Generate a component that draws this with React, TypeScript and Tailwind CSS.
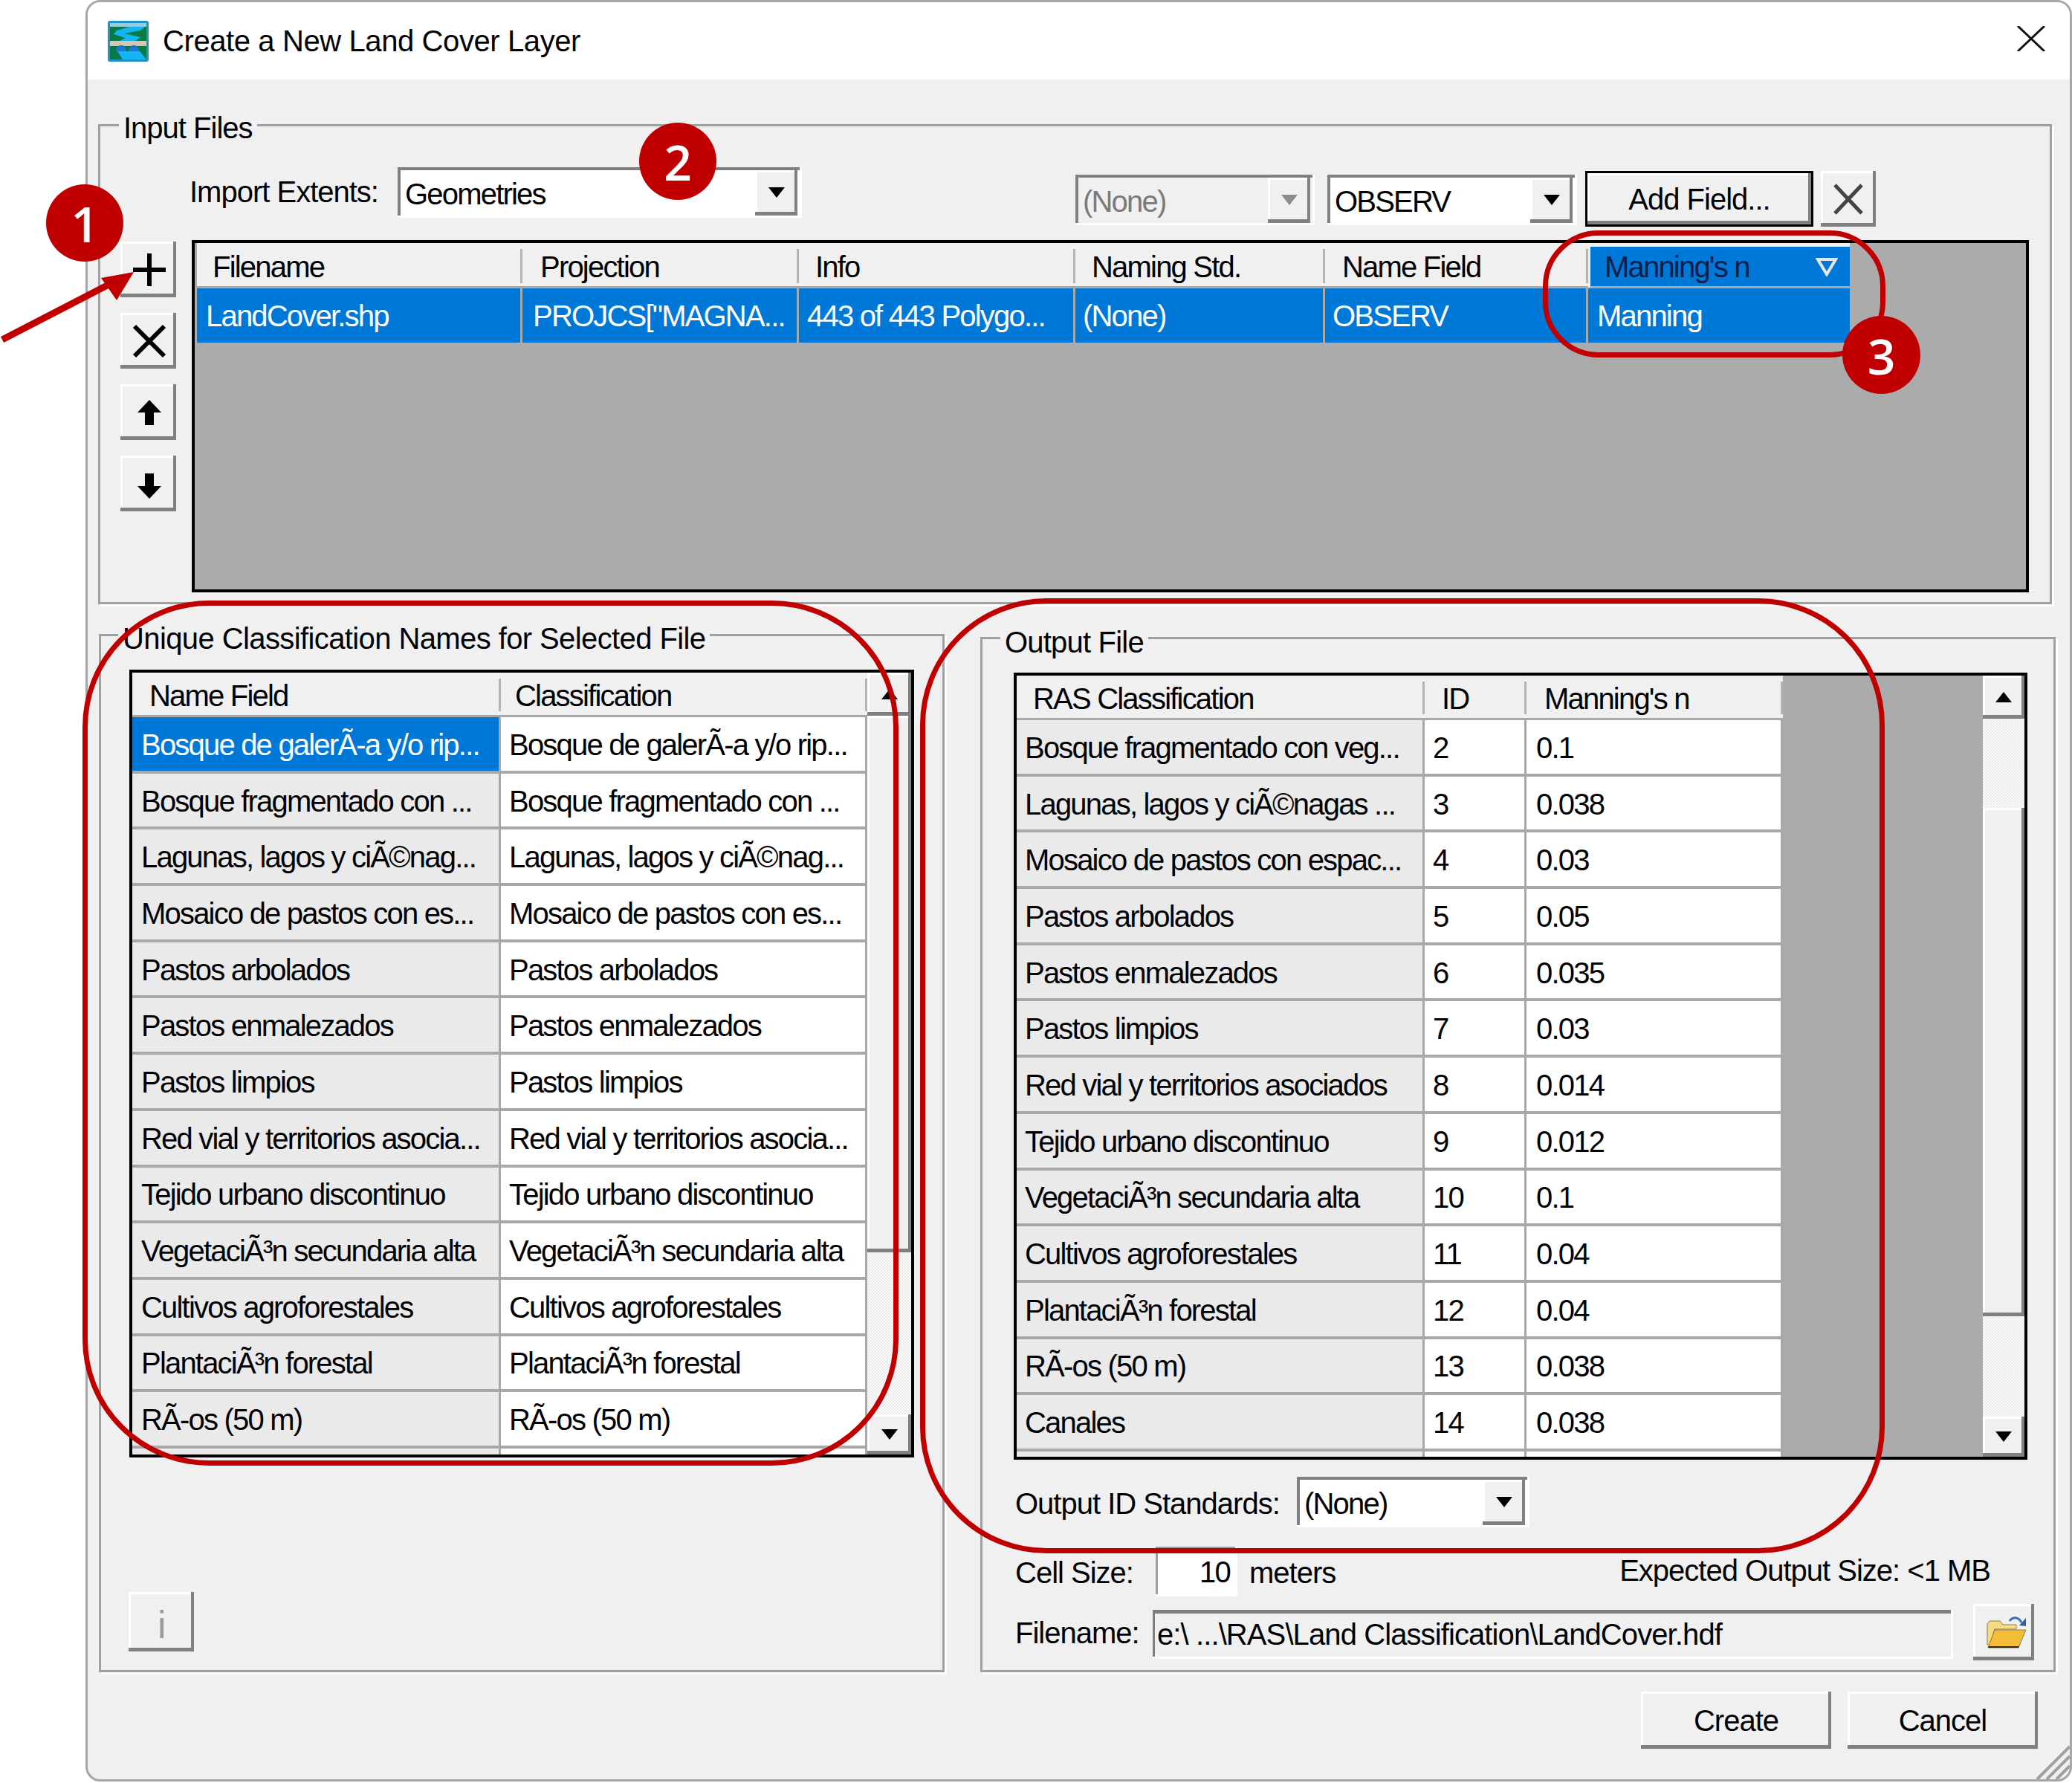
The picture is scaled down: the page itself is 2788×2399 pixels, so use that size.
import type { ReactNode } from 'react';

const raised = 'bg-[#f0f0f0] shadow-[inset_-4px_-5px_0_#808080,inset_3px_3px_0_#ffffff]';
const sunken = 'border-r-[3px] border-b-[3px] border-white shadow-[inset_4px_4px_0_#808080]';
const label = 'tracking-[-1px] pt-[3px]';
const buttonText = 'tracking-[-1px]';
const hatch = 'bg-[repeating-conic-gradient(#ececec_0_25%,#fbfbfb_0_50%)] bg-[length:4px_4px]';

type Col = { width: string; head: string; cell: string; bg: string; label: string };

const fileCols: Col[] = [
  { width: 'w-[438px]', head: 'pl-[21px]', cell: 'pl-[12px]', bg: 'bg-[#0078d7]', label: 'Filename' },
  { width: 'w-[372px]', head: 'pl-[24px]', cell: 'pl-[14px]', bg: 'bg-[#0078d7]', label: 'Projection' },
  { width: 'w-[372px]', head: 'pl-[22px]', cell: 'pl-[11px]', bg: 'bg-[#0078d7]', label: 'Info' },
  { width: 'w-[336px]', head: 'pl-[22px]', cell: 'pl-[10px]', bg: 'bg-[#0078d7]', label: 'Naming Std.' },
  { width: 'w-[354px]', head: 'pl-[23px]', cell: 'pl-[10px]', bg: 'bg-[#0078d7]', label: 'Name Field' },
];

const fileRow = ['LandCover.shp', 'PROJCS["MAGNA...', '443 of 443 Polygo...', '(None)', 'OBSERV'];

const uniqueRows = [
  ['Bosque de galerÃ-a y/o rip...', 'Bosque de galerÃ-a y/o rip...'],
  ['Bosque fragmentado con ...', 'Bosque fragmentado con ...'],
  ['Lagunas, lagos y ciÃ©nag...', 'Lagunas, lagos y ciÃ©nag...'],
  ['Mosaico de pastos con es...', 'Mosaico de pastos con es...'],
  ['Pastos arbolados', 'Pastos arbolados'],
  ['Pastos enmalezados', 'Pastos enmalezados'],
  ['Pastos limpios', 'Pastos limpios'],
  ['Red vial y territorios asocia...', 'Red vial y territorios asocia...'],
  ['Tejido urbano discontinuo', 'Tejido urbano discontinuo'],
  ['VegetaciÃ³n secundaria alta', 'VegetaciÃ³n secundaria alta'],
  ['Cultivos agroforestales', 'Cultivos agroforestales'],
  ['PlantaciÃ³n forestal', 'PlantaciÃ³n forestal'],
  ['RÃ-os (50 m)', 'RÃ-os (50 m)'],
  ['', ''],
];

const outputRows = [
  ['Bosque fragmentado con veg...', '2', '0.1'],
  ['Lagunas, lagos y ciÃ©nagas ...', '3', '0.038'],
  ['Mosaico de pastos con espac...', '4', '0.03'],
  ['Pastos arbolados', '5', '0.05'],
  ['Pastos enmalezados', '6', '0.035'],
  ['Pastos limpios', '7', '0.03'],
  ['Red vial y territorios asociados', '8', '0.014'],
  ['Tejido urbano discontinuo', '9', '0.012'],
  ['VegetaciÃ³n secundaria alta', '10', '0.1'],
  ['Cultivos agroforestales', '11', '0.04'],
  ['PlantaciÃ³n forestal', '12', '0.04'],
  ['RÃ-os (50 m)', '13', '0.038'],
  ['Canales', '14', '0.038'],
  ['', '', ''],
];

const uniqueCols: Col[] = [
  { width: 'w-[496px]', head: 'pl-[23px]', cell: 'pl-[12px]', bg: 'bg-[#eaeaea]', label: 'Name Field' },
  { width: 'w-[493px]', head: 'pl-[19px]', cell: 'pl-[11px]', bg: 'bg-white', label: 'Classification' },
];

const outputCols: Col[] = [
  { width: 'w-[549px]', head: 'pl-[22px]', cell: 'pl-[11px]', bg: 'bg-[#eaeaea]', label: 'RAS Classification' },
  { width: 'w-[137px]', head: 'pl-[23px]', cell: 'pl-[11px]', bg: 'bg-white', label: 'ID' },
  { width: 'w-[345px]', head: 'pl-[24px]', cell: 'pl-[13px]', bg: 'bg-white', label: "Manning's n" },
];

const Triangle = ({ up = false, gray = false }: { up?: boolean; gray?: boolean }) => (
  <svg width="24" height="16" viewBox="0 0 24 16">
    <polygon points={up ? '12,1 23,15 1,15' : '1,1 23,1 12,15'} fill={gray ? '#8c8c8c' : '#000'} />
  </svg>
);

const Combo = ({ text, width, disabled = false }: { text: string; width: string; disabled?: boolean }) => (
  <div className={`${width} ${sunken} h-[68px] flex items-center pl-[10px] pr-[3px] ${disabled ? 'bg-[#f0f0f0] text-[#7a7a7a]' : 'bg-white'}`}>
    <span className="flex-1 pt-[6px]">{text}</span>
    <div className={`w-[57px] ${raised} h-[61px] mt-[3px] flex items-center justify-center`}>
      <Triangle gray={disabled} />
    </div>
  </div>
);

const Group = ({ title, legend, className, children }: { title: string; legend: string; className: string; children: ReactNode }) => (
  <div className={`relative border-[3px] border-[#a0a0a0] shadow-[3px_3px_0_#ffffff] ${className}`}>
    <div className={`absolute bg-[#f0f0f0] px-[6px] pt-[3px] h-[44px] flex items-center ${legend}`}>{title}</div>
    {children}
  </div>
);

const SideButton = ({ children }: { children: ReactNode }) => (
  <div className={`w-[75px] h-[75px] pl-[3px] ${raised} flex items-center justify-center`}>{children}</div>
);

const ScrollBar = ({ upper, thumb, width }: { upper: string; thumb: string; width: string }) => (
  <div className={`${width} flex flex-col shrink-0 ${hatch}`}>
    <div className={`h-[58px] shrink-0 ${raised} flex items-center justify-center`}><Triangle up /></div>
    <div className={upper} />
    <div className={`${thumb} ${raised}`} />
    <div className="flex-1" />
    <div className={`h-[54px] shrink-0 ${raised} flex items-center justify-center`}><Triangle /></div>
  </div>
);

const DataRows = ({ cols, rows, selectedFirst = false }: { cols: Col[]; rows: string[][]; selectedFirst?: boolean }) => (
  <div className="flex flex-col">
    <div className="flex">
      {cols.map((c) => (
        <div key={c.label} className={`${c.width} ${c.head} h-[60px] pt-[4px] shrink-0 bg-[#f0f0f0] border-b-[3px] border-[#a8a8a8] flex items-center relative`}>
          {c.label}
          <div className="absolute right-0 top-[8px] h-[44px] w-[3px] bg-[#b4b4b4]" />
        </div>
      ))}
    </div>
    {rows.map((row, i) => (
      <div key={i} className="flex h-[75.7px] shrink-0">
        {row.map((text, j) => (
          <div
            key={j}
            className={`${cols[j].width} ${cols[j].cell} ${selectedFirst && i === 0 && j === 0 ? 'bg-[#0078d7] text-white' : cols[j].bg} shrink-0 pt-[2px] border-b-[4px] border-r-[3px] border-[#a8a8a8] flex items-center`}
          >
            {text}
          </div>
        ))}
      </div>
    ))}
  </div>
);

const LandIcon = () => (
  <svg width="55" height="55" viewBox="0 0 55 55" className="shrink-0">
    <rect x="0" y="0" width="55" height="55" rx="3" fill="#1f92c8" />
    <rect x="3" y="3" width="49" height="49" fill="#0b7a42" />
    <rect x="3" y="3" width="49" height="5" fill="#9fc8d8" />
    <path d="M30 8h20l-6 5-22 4 22 5-8 6H14l10-5-16-5 4-5z" fill="#12b6f2" />
    <rect x="3" y="27" width="49" height="7" fill="#d8c4b4" />
    <path d="M11 41a6 7 0 0 1 14 0zM28 41a6 7 0 0 1 14 0z" fill="#1878d8" />
    <path d="M13 41h30l9 11H20z" fill="#12b6f2" />
  </svg>
);

const FolderIcon = () => (
  <svg width="56" height="48" viewBox="0 0 56 48">
    <path d="M2 10l3-4h14l4 5h18v6H12L5 38H2z" fill="#f5dc82" stroke="#8f7a4a" />
    <path d="M12 18h42l-10 24H3z" fill="#f3bd3a" stroke="#8f7a4a" />
    <path d="M3 42h41l1-2H4z" fill="#33260f" />
    <path d="M32 6c4-6 12-6 16 2" fill="none" stroke="#3f6fb0" strokeWidth="3" />
    <polygon points="45,12 54,2 54,13" fill="#2f5fa8" />
  </svg>
);

export default function App() {
  return (
    <div className="relative w-[2788px] h-[2399px] overflow-hidden bg-white text-[40px] leading-none tracking-[-1.8px] text-black whitespace-nowrap font-['Liberation_Sans',Arial,sans-serif]">
      <div className="absolute left-[115px] top-0 w-[2673px] h-[2397px] border-[3px] border-[#a6a6a6] rounded-[20px] bg-[#f0f0f0] overflow-hidden flex flex-col">
        <div className="h-[104px] shrink-0 bg-white flex items-center pl-[27px]">
          <LandIcon />
          <span className="ml-[19px] text-[40px] tracking-[-0.4px]">Create a New Land Cover Layer</span>
          <svg width="38" height="34" viewBox="0 0 38 34" className="ml-auto mr-[33px] mb-[6px]">
            <path d="M1 0l36 34M37 0L1 34" stroke="#111" strokeWidth="3" fill="none" />
          </svg>
        </div>

        <div className="flex-1 pl-[14px] flex flex-col">
          {/* input files */}
          <Group title="Input Files" legend="left-[25px] -top-[22px] tracking-[-1px]" className="mt-[60px] w-[2629px] h-[646px] flex flex-col">
            <div className="flex h-[153px] pl-[120px] shrink-0">
              <span className={`w-[280px] mt-[65px] ${label}`}>Import Extents:</span>
              <div className="mt-[55px]"><Combo text="Geometries" width="w-[544px]" /></div>
              <div className="mt-[65px] ml-[368px]"><Combo text="(None)" width="w-[322px]" disabled /></div>
              <div className="mt-[65px] ml-[17px]"><Combo text="OBSERV" width="w-[336px]" /></div>
              <div className={`mt-[60px] ml-[11px] w-[307px] h-[75px] flex items-center justify-center border-[3px] border-black ${raised} ${buttonText}`}>Add Field...</div>
              <div className={`mt-[60px] ml-[10px] w-[74px] h-[75px] flex items-center justify-center ${raised}`}>
                <svg width="42" height="44" viewBox="0 0 42 44"><path d="M3 3l36 38M39 3L3 41" stroke="#444" strokeWidth="5" fill="none" /></svg>
              </div>
            </div>
            <div className="flex pl-[27px]">
              <div className="w-[75px] flex flex-col gap-[21px] mt-[2px] shrink-0">
                <SideButton>
                  <svg width="44" height="44" viewBox="0 0 44 44"><path d="M22 0v44M0 22h44" stroke="#000" strokeWidth="6" /></svg>
                </SideButton>
                <SideButton>
                  <svg width="46" height="46" viewBox="0 0 46 46"><path d="M3 3l40 40M43 3L3 43" stroke="#000" strokeWidth="6" /></svg>
                </SideButton>
                <SideButton>
                  <svg width="32" height="34" viewBox="0 0 32 34"><path d="M16 0L32 17H22V34H10V17H0z" fill="#000" /></svg>
                </SideButton>
                <SideButton>
                  <svg width="32" height="34" viewBox="0 0 32 34" className="mt-[6px]"><path d="M16 34L0 17H10V0H22V17H32z" fill="#000" /></svg>
                </SideButton>
              </div>
              <div className="ml-[21px] w-[2472px] h-[474px] border-[4px] border-black bg-[#ababab] pl-[3px]">
                <div className="flex">
                  {fileCols.map((c) => (
                    <div key={c.label} className={`${c.width} ${c.head} h-[61px] pt-[5px] bg-[#f0f0f0] border-b-[3px] border-[#a8a8a8] flex items-center relative`}>
                      {c.label}
                      <div className="absolute right-0 top-[8px] h-[46px] w-[3px] bg-[#b4b4b4]" />
                    </div>
                  ))}
                  <div className="w-[352px] h-[61px] pl-[19px] pt-[1px] bg-[#0078d7] border-l-[3px] border-l-[#f0f0f0] border-t-[5px] border-t-[#f0f0f0] border-b-[3px] border-b-[#a8a8a8] flex items-center text-[#08204a]">
                    Manning's n
                    <svg width="30" height="26" viewBox="0 0 30 26" className="ml-auto mr-[16px]">
                      <polygon points="3,3 27,3 15,23" fill="none" stroke="#e6e6e6" strokeWidth="4" />
                    </svg>
                  </div>
                </div>
                <div className="flex">
                  {fileRow.map((text, i) => (
                    <div key={text} className={`${fileCols[i].width} ${fileCols[i].cell} h-[73px] bg-[#0078d7] text-white border-r-[3px] border-[#a8a8a8] flex items-center`}>{text}</div>
                  ))}
                  <div className="w-[352px] h-[73px] pl-[12px] bg-[#0078d7] text-white flex items-center">Manning</div>
                </div>
              </div>
            </div>
          </Group>

          <div className="flex items-start">
            {/* unique names */}
            <Group title="Unique Classification Names for Selected File" legend="left-[23px] -top-[21px] tracking-[-0.6px]" className="mt-[40px] ml-[1px] w-[1138px] h-[1397px] flex flex-col">
              <div className="mt-[45px] ml-[38px] w-[1056px] h-[1060px] border-[4px] border-black overflow-hidden flex shrink-0 bg-white">
                <DataRows cols={uniqueCols} rows={uniqueRows} selectedFirst />
                <ScrollBar width="w-[59px]" upper="h-0" thumb="h-[722px] shrink-0" />
              </div>
              <div className={`mt-[181px] ml-[37px] w-[88px] h-[80px] pt-[8px] flex items-center justify-center text-[#a09a98] text-[52px] ${raised}`}>i</div>
            </Group>

            {/* output file */}
            <Group title="Output File" legend="left-[24px] -top-[20px] tracking-[-0.8px]" className="mt-[44px] ml-[48px] w-[1447px] h-[1393px] flex flex-col">
              <div className="mt-[45px] ml-[42px] w-[1364px] h-[1059px] border-[4px] border-black overflow-hidden flex shrink-0 bg-[#ababab]">
                <div className="flex-1 overflow-hidden">
                  <DataRows cols={outputCols} rows={outputRows} />
                </div>
                <ScrollBar width="w-[56px]" upper="h-[120px] shrink-0" thumb="h-[684px] shrink-0" />
              </div>
              <div className="mt-[23px] ml-[44px] flex items-center">
                <span className={`w-[379px] ${label}`}>Output ID Standards:</span>
                <Combo text="(None)" width="w-[313px]" />
              </div>
              <div className="mt-[26px] ml-[44px] mr-[85px] flex items-center h-[67px]">
                <span className={`w-[189px] ${label}`}>Cell Size:</span>
                <div className="w-[110px] h-[67px] bg-white pr-[7px] pt-[4px] flex items-center justify-end border-r-[3px] border-b-[3px] border-white shadow-[inset_3px_3px_0_#a0a0a0]">10</div>
                <span className={`ml-[16px] ${label}`}>meters</span>
                <span className="ml-auto tracking-[-1px] pb-[4px]">Expected Output Size: &lt;1 MB</span>
              </div>
              <div className="mt-[10px] ml-[44px] flex items-center h-[75px]">
                <span className={`w-[185px] ${label}`}>Filename:</span>
                <div className="w-[1077px] h-[66px] mt-[6px] pl-[6px] pt-[3px] tracking-[-0.9px] flex items-center bg-[#f0f0f0] border-r-[3px] border-b-[3px] border-white shadow-[inset_3px_5px_0_#808080]">e:\ ...\RAS\Land Classification\LandCover.hdf</div>
                <div className={`ml-[27px] w-[82px] h-[76px] pl-[7px] pt-[6px] flex items-center justify-center ${raised}`}><FolderIcon /></div>
              </div>
            </Group>
          </div>

          <div className="mt-[26px] pr-[43px] flex justify-end gap-[22px]">
            <div className={`w-[256px] h-[77px] flex items-center justify-center ${raised} ${buttonText}`}>Create</div>
            <div className={`w-[256px] h-[77px] flex items-center justify-center ${raised} ${buttonText}`}>Cancel</div>
          </div>
        </div>

        <svg width="46" height="46" viewBox="0 0 46 46" className="absolute right-0 bottom-0">
          <path d="M46 2L2 46M46 15L15 46M46 28L28 46" stroke="#a0a0a0" strokeWidth="4" />
        </svg>
      </div>

      {/* annotations */}
      <div className="absolute left-[111px] top-[808px] w-[1098px] h-[1164px] border-[7px] border-[#c00000] rounded-[170px]" />
      <div className="absolute left-[1238px] top-[805px] w-[1298px] h-[1285px] border-[7px] border-[#c00000] rounded-[170px]" />
      <div className="absolute left-[2076px] top-[310px] w-[461px] h-[171px] border-[7px] border-[#c00000] rounded-[75px]" />
      <svg width="190" height="110" viewBox="0 0 190 110" className="absolute left-0 top-[357px]">
        <path d="M3 100L150 24" stroke="#c00000" strokeWidth="9" />
        <polygon points="180,9 157,47 136,17" fill="#c00000" />
      </svg>
      <div className="absolute left-[62px] top-[248px] w-[104px] h-[104px] rounded-full bg-[#c00000] text-white text-[66px] tracking-normal font-semibold flex items-center justify-center font-['Open_Sans',sans-serif]">1</div>
      <div className="absolute left-[860px] top-[165px] w-[104px] h-[104px] rounded-full bg-[#c00000] text-white text-[66px] tracking-normal font-semibold flex items-center justify-center font-['Open_Sans',sans-serif]">2</div>
      <div className="absolute left-[2479px] top-[425px] w-[105px] h-[105px] rounded-full bg-[#c00000] text-white text-[66px] tracking-normal font-semibold flex items-center justify-center font-['Open_Sans',sans-serif]">3</div>
    </div>
  );
}
